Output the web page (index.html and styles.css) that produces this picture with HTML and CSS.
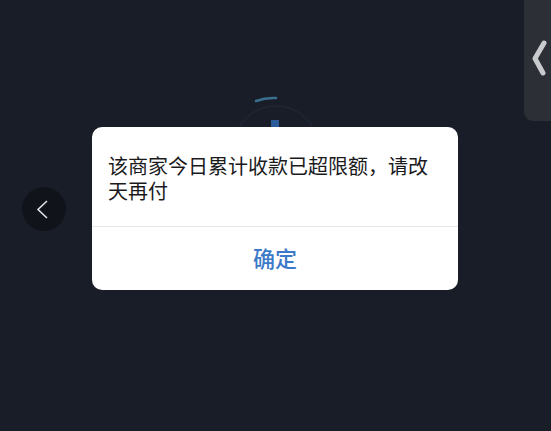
FILE: index.html
```
<!DOCTYPE html>
<html lang="zh">
<head>
<meta charset="utf-8">
<link rel="stylesheet" href="styles.css">
</head>
<body>
<div class="screen">
  <svg class="spinner" width="120" height="120" viewBox="0 0 120 120">
    <circle cx="60" cy="64" r="42" fill="none" stroke="#1f2431" stroke-width="2"/>
    <path d="M 40 17 A 50 50 0 0 1 60 14" fill="none" stroke="#3b6f90" stroke-width="2.5" stroke-linecap="round"/>
    <rect x="55" y="36" width="8" height="10" fill="#2b5b98"/>
  </svg>
  <button class="back" aria-label="返回">
    <svg width="44" height="44" viewBox="0 0 44 44"><polyline points="25,14 16,22.5 25,31" fill="none" stroke="#e2e2e4" stroke-width="1.6"/></svg>
  </button>
  <div class="side-tab">
    <svg width="27" height="121" viewBox="0 0 27 121"><polyline points="20,43 11,58.5 19,73" fill="none" stroke="#c9cace" stroke-width="5" stroke-linecap="round" stroke-linejoin="round"/></svg>
  </div>
  <div class="dialog">
    <div class="dialog-body">该商家今日累计收款已超限额，请改天再付</div>
    <div class="dialog-actions"><span class="ok">确定</span></div>
  </div>
</div>
</body>
</html>
```
FILE: styles.css
```
html, body {
  margin: 0;
  padding: 0;
  background: #191d28;
  overflow: hidden;
}
.screen {
  position: relative;
  width: 551px;
  height: 431px;
  background: #191d28;
  font-family: "Noto Sans CJK SC", "Noto Sans", sans-serif;
}
.spinner {
  position: absolute;
  left: 216px;
  top: 84px;
}
.back {
  position: absolute;
  left: 22px;
  top: 187px;
  width: 44px;
  height: 44px;
  padding: 0;
  border: none;
  border-radius: 50%;
  background: #10131a;
  display: flex;
}
.side-tab {
  position: absolute;
  left: 524px;
  top: 0;
  width: 40px;
  height: 121px;
  background: #2d2f36;
  border-radius: 0 0 0 9px;
}
.side-tab svg {
  display: block;
}
.dialog {
  position: absolute;
  left: 92px;
  top: 127px;
  width: 366px;
  height: 163px;
  background: #ffffff;
  border-radius: 10px;
  display: flex;
  flex-direction: column;
  overflow: hidden;
}
.dialog-body {
  padding: 26px 16px 0 16px;
  height: 73px;
  font-size: 20px;
  line-height: 25px;
  color: #1a1a1c;
  border-bottom: 1px solid #e6e6e8;
}
.dialog-actions {
  flex: 1;
  display: flex;
  align-items: center;
  justify-content: center;
}
.ok {
  font-size: 22px;
  font-weight: 500;
  color: #3c79c8;
  line-height: 1;
  margin-top: -4px;
}
```
